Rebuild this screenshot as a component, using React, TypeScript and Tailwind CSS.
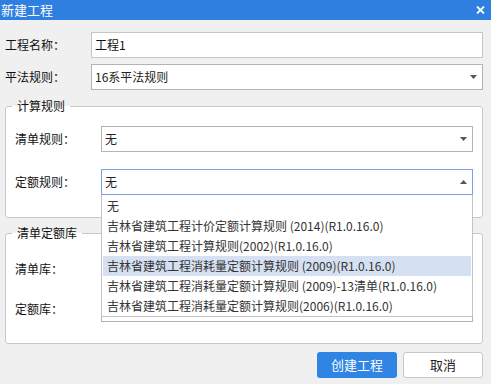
import React from 'react';

const font = { fontFamily: '"Microsoft YaHei", "Noto Sans CJK SC", "Noto Sans", sans-serif' };

function Arrow({ up = false }: { up?: boolean }) {
  return (
    <svg width="7" height="4" viewBox="0 0 7 4" className="shrink-0">
      {up ? <path d="M3.5 0 L7 4 L0 4 Z" fill="#555" /> : <path d="M0 0 L7 0 L3.5 4 Z" fill="#555" />}
    </svg>
  );
}

function Select({ value, open = false }: { value: string; open?: boolean }) {
  return (
    <div
      className={`flex h-[26px] flex-1 items-center justify-between border bg-white pl-[3px] pr-[5px] text-[12px] text-[#222] ${
        open ? 'border-[#7aa2e3]' : 'border-[#b4b4b4]'
      }`}
    >
      <span>{value}</span>
      <Arrow up={open} />
    </div>
  );
}

const options = [
  '无',
  '吉林省建筑工程计价定额计算规则 (2014)(R1.0.16.0)',
  '吉林省建筑工程计算规则(2002)(R1.0.16.0)',
  '吉林省建筑工程消耗量定额计算规则 (2009)(R1.0.16.0)',
  '吉林省建筑工程消耗量定额计算规则 (2009)-13清单(R1.0.16.0)',
  '吉林省建筑工程消耗量定额计算规则(2006)(R1.0.16.0)',
];

export default function App() {
  return (
    <div className="h-[384px] w-[491px] overflow-hidden bg-[#f0f0f0]" style={font}>
      {/* title bar */}
      <div className="flex h-[20px] items-center justify-between bg-[#2e7fe0] pl-px pr-[6px] text-[13px] text-white">
        <span>新建工程</span>
        <svg width="9" height="8" viewBox="0 0 9 8">
          <path d="M1 0.5 L8 7.5 M8 0.5 L1 7.5" stroke="#fff" strokeWidth="1.8" />
        </svg>
      </div>

      <div className="pl-[5px] pr-[8px] pt-[12px] text-[12px] text-[#111]">
        <div className="flex h-[26px] items-center">
          <span className="w-[86px]">工程名称：</span>
          <div className="flex h-[26px] flex-1 items-center border border-[#c6c6c6] bg-white pl-[3px]">工程1</div>
        </div>
        <div className="mt-[6px] flex h-[26px] items-center">
          <span className="w-[86px]">平法规则：</span>
          <Select value="16系平法规则" />
        </div>

        <fieldset className="mt-[8px] rounded-[3px] border border-[#c8c8c8] bg-white pb-[22px] pl-[9px] pr-[9px] pt-[12px]">
          <legend className="-ml-[3px] px-[5px] leading-[16px]">计算规则</legend>
          <div className="flex h-[26px] items-center">
            <span className="w-[86px]">清单规则：</span>
            <Select value="无" />
          </div>
          <div className="mt-[17px] flex h-[26px] items-center">
            <span className="w-[86px]">定额规则：</span>
            <div className="relative flex flex-1">
              <Select value="无" open />
              <div className="absolute left-0 right-0 top-full z-10 border-x border-b border-[#c4c4c4] bg-white pt-px text-[12px] text-[#333]">
                {options.map((o, i) => (
                  <div
                    key={o}
                    className={`mx-px flex h-[20px] items-center pl-[4px] whitespace-nowrap ${
                      i === 3 ? 'bg-[#d5e1f2]' : ''
                    }`}
                  >
                    {o}
                  </div>
                ))}
              </div>
            </div>
          </div>
        </fieldset>

        <fieldset className="mt-[7px] rounded-[3px] border border-[#c8c8c8] bg-white pb-[21px] pl-[9px] pr-[9px] pt-[15px]">
          <legend className="-ml-[3px] px-[5px] leading-[16px]">清单定额库</legend>
          <div className="flex h-[26px] items-center">
            <span className="w-[86px]">清单库：</span>
            <Select value="" />
          </div>
          <div className="mt-[14px] flex h-[26px] items-center">
            <span className="w-[86px]">定额库：</span>
            <Select value="" />
          </div>
        </fieldset>

        <div className="mt-[8px] flex justify-end gap-[6px]">
          <button className="h-[26px] w-[80px] rounded-[3px] bg-[#2f84e4] text-[13px] text-white">创建工程</button>
          <button className="h-[26px] w-[80px] rounded-[3px] border border-[#c8c8c8] bg-white text-[13px] text-[#222]">
            取消
          </button>
        </div>
      </div>
    </div>
  );
}
